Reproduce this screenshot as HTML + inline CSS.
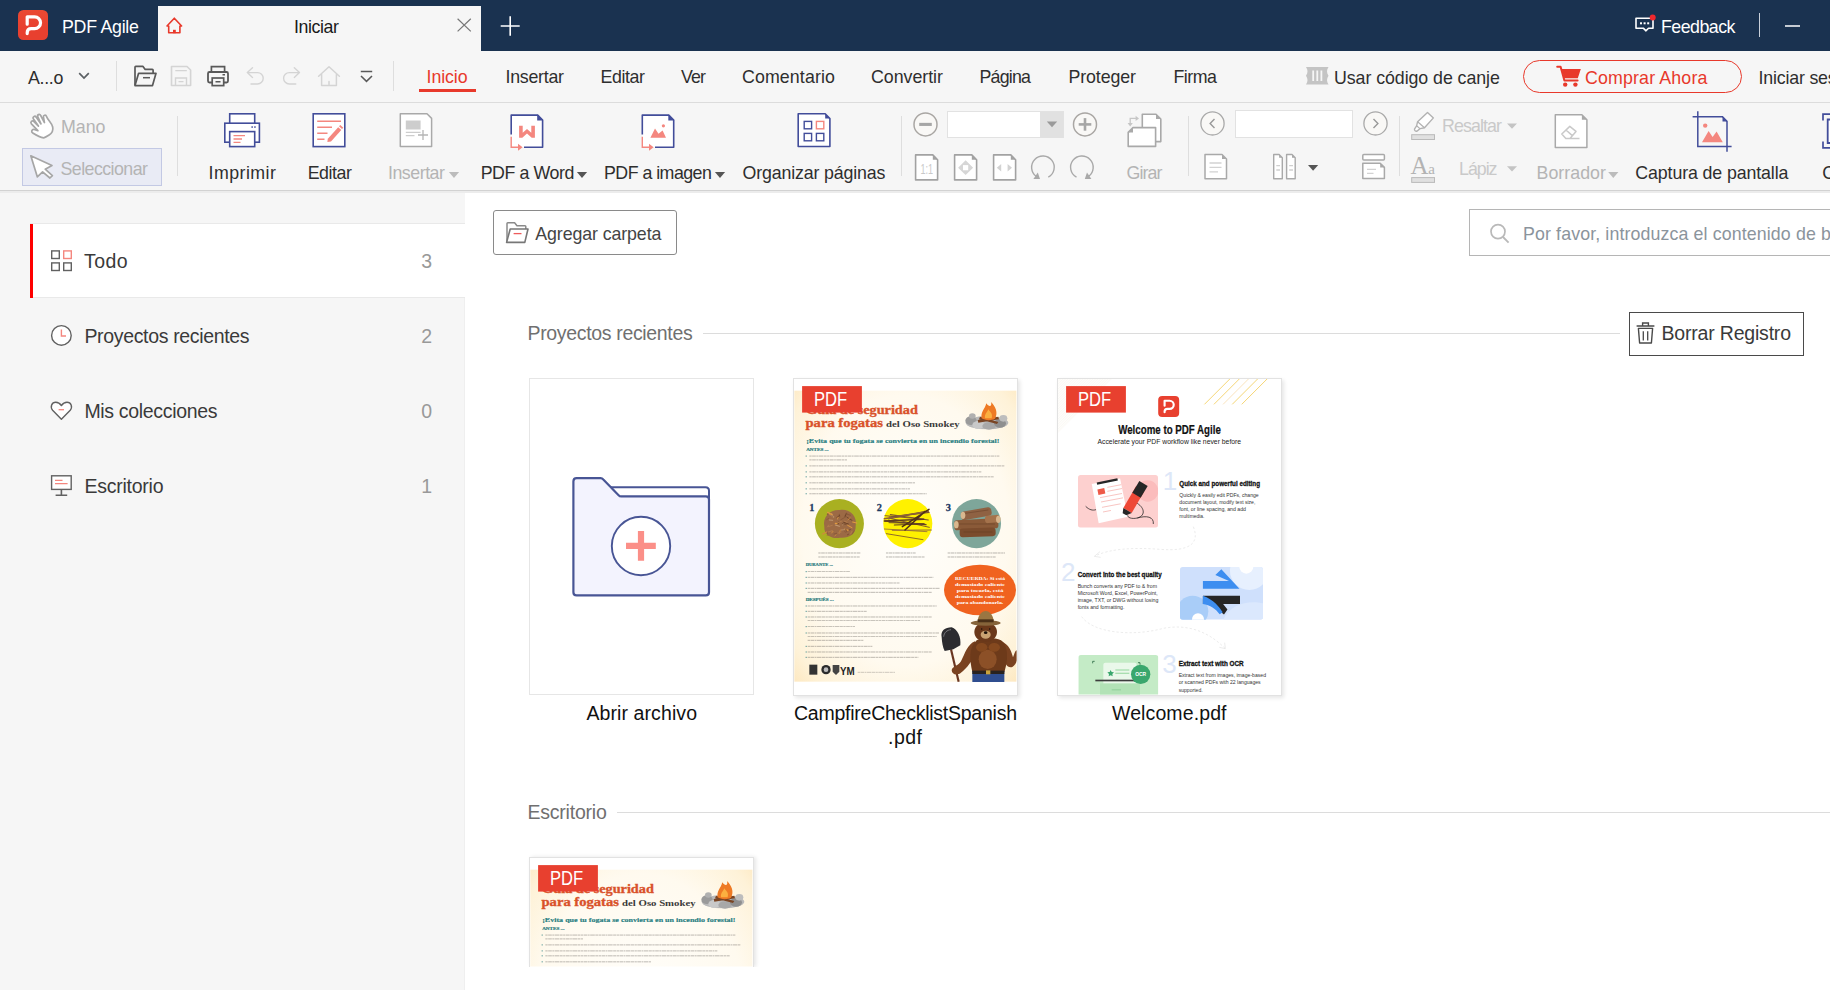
<!DOCTYPE html>
<html><head><meta charset="utf-8"><title>PDF Agile</title>
<style>
html,body{margin:0;padding:0;}
body{width:1830px;height:990px;overflow:hidden;position:relative;background:#fff;font-family:"Liberation Sans",sans-serif;}
.b{position:absolute;}
.t{position:absolute;white-space:nowrap;}
svg.ov{position:absolute;left:0;top:0;}
</style></head><body>
<div class="b" style="left:0px;top:0px;width:1830px;height:51px;background:#1a3250;"></div>
<div class="b" style="left:158px;top:6px;width:323px;height:45px;background:#f6f6f6;"></div>
<div class="b" style="left:18px;top:10px;width:30.2px;height:30.2px;background:linear-gradient(#ea4a33,#e8402f 60%);border-radius:5.5px;"></div>
<span class="t" style="left:62.00px;top:18.83px;font-size:17.8px;line-height:17.8px;color:#fff;letter-spacing:-0.268px;">PDF Agile</span>
<span class="t" style="left:294.00px;top:18.53px;font-size:17.8px;line-height:17.8px;color:#1a1a1a;letter-spacing:-0.414px;">Iniciar</span>
<span class="t" style="left:1661.00px;top:18.83px;font-size:17.8px;line-height:17.8px;color:#fff;letter-spacing:-0.524px;">Feedback</span>
<div class="b" style="left:1759px;top:13px;width:1.4px;height:24px;background:#c9d0da;"></div>
<div class="b" style="left:0px;top:51px;width:1830px;height:51px;background:#f6f6f6;"></div>
<div class="b" style="left:0px;top:101.5px;width:1830px;height:1.2px;background:#dcdcdc;"></div>
<div class="b" style="left:116px;top:61px;width:1px;height:30px;background:#dedede;"></div>
<div class="b" style="left:393px;top:61px;width:1px;height:30px;background:#dedede;"></div>
<span class="t" style="left:28.00px;top:69.93px;font-size:17.8px;line-height:17.8px;color:#2e2e2e;letter-spacing:-0.302px;">A...o</span>
<span class="t" style="left:426.60px;top:68.83px;font-size:17.8px;line-height:17.8px;color:#e8392b;letter-spacing:-0.111px;">Inicio</span>
<span class="t" style="left:505.50px;top:68.83px;font-size:17.8px;line-height:17.8px;color:#2e2e2e;letter-spacing:-0.264px;">Insertar</span>
<span class="t" style="left:600.50px;top:68.83px;font-size:17.8px;line-height:17.8px;color:#2e2e2e;letter-spacing:-0.400px;">Editar</span>
<span class="t" style="left:681.00px;top:68.83px;font-size:17.8px;line-height:17.8px;color:#2e2e2e;letter-spacing:-0.859px;">Ver</span>
<span class="t" style="left:742.00px;top:68.83px;font-size:17.8px;line-height:17.8px;color:#2e2e2e;letter-spacing:0.110px;">Comentario</span>
<span class="t" style="left:871.00px;top:68.83px;font-size:17.8px;line-height:17.8px;color:#2e2e2e;letter-spacing:-0.026px;">Convertir</span>
<span class="t" style="left:979.50px;top:68.83px;font-size:17.8px;line-height:17.8px;color:#2e2e2e;letter-spacing:-0.785px;">Página</span>
<span class="t" style="left:1068.50px;top:68.83px;font-size:17.8px;line-height:17.8px;color:#2e2e2e;letter-spacing:-0.110px;">Proteger</span>
<span class="t" style="left:1173.50px;top:68.83px;font-size:17.8px;line-height:17.8px;color:#2e2e2e;letter-spacing:-0.496px;">Firma</span>
<div class="b" style="left:419px;top:89px;width:57px;height:3px;background:#e8392b;"></div>
<span class="t" style="left:1334.00px;top:70.03px;font-size:17.8px;line-height:17.8px;color:#2e2e2e;letter-spacing:-0.064px;">Usar código de canje</span>
<div class="b" style="left:1523px;top:60px;width:219px;height:32.6px;border:1.4px solid #e8392b;border-radius:17px;box-sizing:border-box;"></div>
<span class="t" style="left:1585.00px;top:70.03px;font-size:17.8px;line-height:17.8px;color:#e8392b;letter-spacing:0.150px;">Comprar Ahora</span>
<span class="t" style="left:1758.50px;top:70.03px;font-size:17.8px;line-height:17.8px;color:#2e2e2e;letter-spacing:-0.183px;">Iniciar sesión</span>
<div class="b" style="left:0px;top:102.7px;width:1830px;height:87.3px;background:#f6f6f6;"></div>
<div class="b" style="left:0px;top:189.6px;width:1830px;height:1.6px;background:#d2d2d2;"></div>
<div class="b" style="left:0px;top:191.2px;width:1830px;height:1.6px;background:#ececec;"></div>
<div class="b" style="left:22px;top:148px;width:140px;height:37.5px;background:#e9ebf5;border:1px solid #c3c9e4;box-sizing:border-box;"></div>
<span class="t" style="left:61.00px;top:118.63px;font-size:17.8px;line-height:17.8px;color:#b4b4b4;letter-spacing:-0.009px;">Mano</span>
<span class="t" style="left:60.50px;top:161.33px;font-size:17.8px;line-height:17.8px;color:#b4b4b4;letter-spacing:-0.551px;">Seleccionar</span>
<div class="b" style="left:177px;top:116px;width:1px;height:60px;background:#dedede;"></div>
<div class="b" style="left:901px;top:116px;width:1px;height:60px;background:#dedede;"></div>
<div class="b" style="left:1188px;top:116px;width:1px;height:60px;background:#dedede;"></div>
<div class="b" style="left:1399px;top:116px;width:1px;height:60px;background:#dedede;"></div>
<span class="t" style="left:208.50px;top:164.53px;font-size:17.8px;line-height:17.8px;color:#2e2e2e;letter-spacing:0.462px;">Imprimir</span>
<span class="t" style="left:307.70px;top:164.53px;font-size:17.8px;line-height:17.8px;color:#2e2e2e;letter-spacing:-0.440px;">Editar</span>
<span class="t" style="left:388.00px;top:164.53px;font-size:17.8px;line-height:17.8px;color:#b4b4b4;letter-spacing:-0.478px;">Insertar</span>
<span class="t" style="left:480.70px;top:164.53px;font-size:17.8px;line-height:17.8px;color:#2e2e2e;letter-spacing:-0.433px;">PDF a Word</span>
<span class="t" style="left:604.00px;top:164.53px;font-size:17.8px;line-height:17.8px;color:#2e2e2e;letter-spacing:-0.525px;">PDF a imagen</span>
<span class="t" style="left:742.50px;top:164.53px;font-size:17.8px;line-height:17.8px;color:#2e2e2e;letter-spacing:-0.153px;">Organizar páginas</span>
<span class="t" style="left:1126.50px;top:164.53px;font-size:17.8px;line-height:17.8px;color:#b4b4b4;letter-spacing:-0.889px;">Girar</span>
<span class="t" style="left:1442.00px;top:118.03px;font-size:17.8px;line-height:17.8px;color:#c9c9c9;letter-spacing:-0.897px;">Resaltar</span>
<span class="t" style="left:1459.00px;top:161.23px;font-size:17.8px;line-height:17.8px;color:#c9c9c9;letter-spacing:-1.013px;">Lápiz</span>
<span class="t" style="left:1536.50px;top:164.53px;font-size:17.8px;line-height:17.8px;color:#b4b4b4;letter-spacing:0.035px;">Borrador</span>
<span class="t" style="left:1635.30px;top:164.53px;font-size:17.8px;line-height:17.8px;color:#2e2e2e;letter-spacing:-0.115px;">Captura de pantalla</span>
<span class="t" style="left:1822.20px;top:164.53px;font-size:17.8px;line-height:17.8px;color:#2e2e2e;letter-spacing:-0.309px;">Combinar</span>
<div class="b" style="left:947px;top:111px;width:117px;height:27px;background:#fff;border:1px solid #e2e2e2;box-sizing:border-box;"></div>
<div class="b" style="left:1040.3px;top:111.5px;width:23.2px;height:26px;background:#e1e1e1;"></div>
<div class="b" style="left:1235.4px;top:109.5px;width:117.2px;height:28.2px;background:#fff;border:1px solid #e2e2e2;box-sizing:border-box;"></div>
<div class="b" style="left:0px;top:192.8px;width:465px;height:797.2px;background:#f6f6f6;"></div>
<div class="b" style="left:464.8px;top:192.8px;width:1365.2px;height:797.2px;background:#fff;"></div>
<div class="b" style="left:464.3px;top:298px;width:0.8px;height:692px;background:#efefef;"></div>
<div class="b" style="left:30px;top:223px;width:434.8px;height:75px;background:#fff;border-top:1px solid #e9e9e9;border-bottom:1px solid #e9e9e9;box-sizing:border-box;"></div>
<div class="b" style="left:30px;top:223.8px;width:3px;height:74.2px;background:#fe0000;"></div>
<span class="t" style="left:84.00px;top:252.19px;font-size:19.5px;line-height:19.5px;color:#3a3a3a;letter-spacing:0.438px;">Todo</span>
<span class="t" style="left:84.40px;top:327.09px;font-size:19.5px;line-height:19.5px;color:#3a3a3a;letter-spacing:-0.336px;">Proyectos recientes</span>
<span class="t" style="left:84.40px;top:401.99px;font-size:19.5px;line-height:19.5px;color:#3a3a3a;letter-spacing:-0.317px;">Mis colecciones</span>
<span class="t" style="left:84.40px;top:476.99px;font-size:19.5px;line-height:19.5px;color:#3a3a3a;letter-spacing:-0.241px;">Escritorio</span>
<span class="t" style="left:421.30px;top:252.19px;font-size:19.5px;line-height:19.5px;color:#999;">3</span>
<span class="t" style="left:421.30px;top:327.09px;font-size:19.5px;line-height:19.5px;color:#999;">2</span>
<span class="t" style="left:421.30px;top:401.99px;font-size:19.5px;line-height:19.5px;color:#999;">0</span>
<span class="t" style="left:421.30px;top:476.99px;font-size:19.5px;line-height:19.5px;color:#999;">1</span>
<div class="b" style="left:493px;top:210px;width:184px;height:44.8px;border:1.2px solid #8a8a8a;border-radius:3px;box-sizing:border-box;background:#fff;"></div>
<span class="t" style="left:535.30px;top:225.83px;font-size:17.8px;line-height:17.8px;color:#444;letter-spacing:-0.103px;">Agregar carpeta</span>
<div class="b" style="left:1469px;top:209px;width:380px;height:46.5px;border:1.2px solid #b5b5b5;box-sizing:border-box;background:#fff;"></div>
<span class="t" style="left:1523.00px;top:225.63px;font-size:17.8px;line-height:17.8px;color:#8b949c;letter-spacing:0.116px;">Por favor, introduzca el contenido de búsqueda</span>
<span class="t" style="left:527.50px;top:324.49px;font-size:19.5px;line-height:19.5px;color:#707070;letter-spacing:-0.336px;">Proyectos recientes</span>
<div class="b" style="left:703px;top:332.7px;width:917px;height:1.2px;background:#dcdcdc;"></div>
<div class="b" style="left:1629px;top:312px;width:175px;height:43.5px;border:1.3px solid #4a4a4a;box-sizing:border-box;background:#fff;"></div>
<span class="t" style="left:1661.50px;top:324.49px;font-size:19.5px;line-height:19.5px;color:#3a3a3a;letter-spacing:-0.193px;">Borrar Registro</span>
<span class="t" style="left:527.50px;top:803.39px;font-size:19.5px;line-height:19.5px;color:#707070;letter-spacing:-0.219px;">Escritorio</span>
<div class="b" style="left:617px;top:811.6px;width:1213px;height:1.2px;background:#dcdcdc;"></div>
<div class="b" style="left:529px;top:378px;width:224.6px;height:317.4px;border:1px solid #e6e6e6;box-sizing:border-box;background:#fff;"></div>
<span class="t" style="left:586.50px;top:703.99px;font-size:19.5px;line-height:19.5px;color:#111;letter-spacing:0.087px;">Abrir archivo</span>
<span class="t" style="left:794.00px;top:703.99px;font-size:19.5px;line-height:19.5px;color:#111;letter-spacing:-0.247px;">CampfireChecklistSpanish</span>
<span class="t" style="left:888.00px;top:727.99px;font-size:19.5px;line-height:19.5px;color:#111;letter-spacing:0.492px;">.pdf</span>
<span class="t" style="left:1112.00px;top:703.99px;font-size:19.5px;line-height:19.5px;color:#111;letter-spacing:0.106px;">Welcome.pdf</span>
<div class="b" style="left:793px;top:378px;width:224.6px;height:317.6px;border:1px solid #e2e2e2;box-sizing:border-box;background:#fff;box-shadow:2px 2px 4px rgba(0,0,0,0.10);"></div>
<div class="b" style="left:1057px;top:378px;width:224.6px;height:317.6px;border:1px solid #e2e2e2;box-sizing:border-box;background:#fff;box-shadow:2px 2px 4px rgba(0,0,0,0.10);"></div>
<div class="b" style="left:529px;top:857px;width:224.6px;height:109.6px;border:1px solid #e2e2e2;border-bottom:none;box-sizing:border-box;background:#fff;box-shadow:2px 0px 4px rgba(0,0,0,0.10);"></div>
<div class="b" style="left:465.6px;top:966.6px;width:1365px;height:24px;background:#fff;"></div>

<svg class="ov" width="1830" height="990" viewBox="0 0 1830 990">
<path d="M27.2 24.2 V16.8 H34.6 a5.95 5.95 0 0 1 0 11.9 H31.2 q-4 0 -4 4 V33.6" fill="none" stroke="#fff" stroke-width="3.2" stroke-linecap="round" stroke-linejoin="round"/><path d="M167 26 L174.3 18.2 L181.6 26 H179.9 V32.8 H168.7 V26 Z" fill="none" stroke="#e8392b" stroke-width="1.6" stroke-linejoin="round"/><rect x="173" y="29.8" width="2.8" height="3.4" fill="#e8392b"/><path d="M457.6 18.8 L470.8 31.4 M470.8 18.8 L457.6 31.4" stroke="#777" stroke-width="1.2" fill="none"/><path d="M500.7 26 H519.7 M510.2 16.2 V35.8" stroke="#fff" stroke-width="1.6" fill="none"/><path d="M1636 18.3 H1653 V28.2 H1648.5 L1646 30.8 L1643.3 28.2 H1636 Z" fill="none" stroke="#fff" stroke-width="1.6" stroke-linejoin="round"/><rect x="1640" y="22.3" width="2" height="2" fill="#fff"/><rect x="1643.6" y="22.3" width="2" height="2" fill="#fff"/><rect x="1647.2" y="22.3" width="2" height="2" fill="#fff"/><circle cx="1652.7" cy="17.4" r="3" fill="#f0282d"/><path d="M1785 26 H1800" stroke="#fff" stroke-width="1.5"/><path d="M79.2 73.2 L84 78.1 L88.8 73.2" fill="none" stroke="#5a5f63" stroke-width="1.7"/><path d="M135 85.3 V67.2 q0-.8 .8-.8 H143 l2.2 3 H152.3 q.8 0 .8 .8 V73" fill="none" stroke="#595959" stroke-width="1.7" stroke-linejoin="round"/><path d="M138.6 73.3 H156 L152.5 85.6 H135 Z" fill="none" stroke="#595959" stroke-width="1.7" stroke-linejoin="round"/><path d="M143 77.7 H150" stroke="#595959" stroke-width="1.5"/><path d="M171.5 66.5 H187 L190.6 70 V85.5 H171.5 Z" fill="none" stroke="#d4d4d4" stroke-width="1.6" stroke-linejoin="round"/><path d="M175.3 70.6 H186.8 M175.5 85.5 V78 H186.5 V85.5 M178.5 81.6 H183.5" fill="none" stroke="#d4d4d4" stroke-width="1.4"/><path d="M211.4 72 V66.7 H224.6 V72" fill="none" stroke="#595959" stroke-width="1.7"/><rect x="208" y="72" width="20" height="10.5" rx="1.5" fill="none" stroke="#595959" stroke-width="1.8"/><rect x="212.2" y="78" width="11.5" height="7.6" fill="#f6f6f6" stroke="#595959" stroke-width="1.7"/><path d="M215.5 81.7 H220.5 M222.5 74.8 H225" stroke="#595959" stroke-width="1.4"/><path d="M252.5 67.8 L247.3 72.6 L252.5 77.4 M247.8 72.6 H257.5 a5.7 5.7 0 0 1 0 11.4 H251" fill="none" stroke="#d4d4d4" stroke-width="1.4" stroke-linecap="round" stroke-linejoin="round"/><path d="M294.3 67.8 L299.5 72.6 L294.3 77.4 M299 72.6 H289.3 a5.7 5.7 0 0 0 0 11.4 H295.8" fill="none" stroke="#d4d4d4" stroke-width="1.4" stroke-linecap="round" stroke-linejoin="round"/><path d="M318.6 76.3 L329 66.8 L339.4 76.3 M321.6 74.4 V85.4 H336.4 V74.4 M329 85.4 V81.5" fill="none" stroke="#d4d4d4" stroke-width="1.5" stroke-linejoin="round" stroke-linecap="round"/><path d="M360.8 71.4 H372.2 M361 76 L366.5 81.4 L372 76" fill="none" stroke="#595959" stroke-width="1.5"/><path d="M1306 67 H1328.5 C1326.5 70 1326.5 72.5 1328.5 75.8 C1326.5 79 1326.5 81.5 1328.5 84.6 H1306 C1308 81.5 1308 79 1306 75.8 C1308 72.5 1308 70 1306 67 Z" fill="#c4c4c4"/><path d="M1313.2 70.5 V81 M1317.3 70.5 V81 M1321.4 70.5 V81" stroke="#f6f6f6" stroke-width="1.8"/><path d="M1557.2 66.7 H1560.6 L1564.4 80.5 H1577.6" fill="none" stroke="#e8392b" stroke-width="2" stroke-linejoin="round" stroke-linecap="round"/><path d="M1561.6 69 H1580.8 L1577.8 78.2 H1564.2 Z" fill="#e8392b"/><circle cx="1565.2" cy="84.6" r="2.2" fill="#e8392b"/><circle cx="1575.4" cy="84.6" r="2.2" fill="#e8392b"/><g transform="translate(41.6 125.4) rotate(-33)"><path d="M-5 11.6 C-8 9 -10 5 -11.6 1.6 C-12.6 -0.6 -10 -2.2 -8.5 -0.6 L-6 2.4 L-7.7 -6.8 C-8 -9.2 -4.8 -9.8 -4.3 -7.4 L-3 -1.2 L-3.3 -9.8 C-3.3 -12.2 -0.1 -12.2 0 -9.8 L0.3 -1.6 L1.5 -9.2 C1.8 -11.5 4.9 -11.1 4.6 -8.8 L3.9 -0.8 L6 -5.8 C6.8 -7.9 9.6 -7 9 -4.8 C8 -1 10 3.2 8.4 7.4 C7.2 10.6 4.2 12.2 1 12.2 C-1.5 12.2 -3.5 12.2 -5 11.6 Z" fill="#fff" stroke="#a6a6a6" stroke-width="1.7" stroke-linejoin="round"/></g><path d="M30.8 155.8 L52 165.4 L45.2 169.2 L52.4 175.6 L49.9 178 L42.6 171.8 L37.3 176.8 Z" fill="#fff" stroke="#a6a6a6" stroke-width="1.7" stroke-linejoin="round"/><rect x="229.7" y="113.8" width="25" height="12" fill="#fff" stroke="#424d9a" stroke-width="1.6"/><rect x="224.8" y="123.2" width="34.6" height="19" fill="#fff" stroke="#424d9a" stroke-width="1.6"/><rect x="229.7" y="131.6" width="25" height="15" fill="#fff" stroke="#424d9a" stroke-width="1.6"/><path d="M233.5 135.6 H245 M233.5 139 H242 M233.5 142.4 H240.5" stroke="#f4877f" stroke-width="1.3"/><rect x="251.4" y="126.3" width="1.5" height="1.5" fill="#424d9a"/><rect x="254.2" y="126.3" width="1.5" height="1.5" fill="#424d9a"/><rect x="313.2" y="113.8" width="31.6" height="32.8" fill="#fff" stroke="#424d9a" stroke-width="1.6"/><path d="M317.2 121.3 H341 M317.2 127.3 H332 M317.2 133.3 H327.5 M317.2 139.3 H324.5" stroke="#f4877f" stroke-width="1.5"/><path d="M327.8 138.8 L338.2 127.2 L341.3 130 L331 141.4 L327.4 142 Z" fill="#f4877f"/><path d="M339 126.3 L340.3 124.9 L343.3 127.7 L342 129.1 Z" fill="#f4877f"/><path d="M400.3 113.8 H427 L431.6 118.4 V146.5 H400.3 Z" fill="#fff" stroke="#a9a9a9" stroke-width="1.5" stroke-linejoin="round"/><rect x="405.8" y="120.5" width="14.8" height="9" fill="#cdcdcd"/><path d="M405.8 132.4 H420.6 M405.8 135.6 H414.5" stroke="#cdcdcd" stroke-width="1.2"/><path d="M418 135 H428 M423 130 V140" stroke="#b5b5b5" stroke-width="1.3"/><path d="M448.9 172.1 H459.1 L454.0 177.9 Z" fill="#bcbcbc"/><path d="M511.2 115.1 H537.7 L542.6 120 V147.3 H511.2 Z" fill="#fff"/><path d="M511.2 134.6 V115.1 H537.7 L542.6 120 V147.3 H524" fill="none" stroke="#424d9a" stroke-width="1.6" stroke-linejoin="round"/><path d="M537.2 114.6 L543.2 120.6 H537.2 Z" fill="#424d9a"/><path d="M519.1 125.8 H522.7 V132.8 L527 128.9 L531.3 132.8 V125.8 H534.9 V137.8 H531.7 L527 133.6 L522.3 137.8 H519.1 Z" fill="#f4877f"/><path d="M511.2 136.8 V147.3 H518.5" fill="none" stroke="#f4877f" stroke-width="1.4"/><path d="M518 143.8 L522.6 147.3 L518 150.8 Z" fill="#f4877f"/><path d="M576.9 172.1 H587.1 L582.0 177.9 Z" fill="#555"/><path d="M642.3 115.1 H668.8 L673.7 120 V147.3 H642.3 Z" fill="#fff"/><path d="M642.3 134.6 V115.1 H668.8 L673.7 120 V147.3 H655" fill="none" stroke="#424d9a" stroke-width="1.6" stroke-linejoin="round"/><path d="M668.3 114.6 L674.3 120.6 H668.3 Z" fill="#424d9a"/><path d="M650.4 137.8 L655 128.5 L658.5 133.8 L662.6 130.6 L666 137.8 Z" fill="#f4877f"/><circle cx="663.4" cy="125.8" r="1.6" fill="#f4877f"/><path d="M642.3 136.8 V147.3 H649.5" fill="none" stroke="#f4877f" stroke-width="1.4"/><path d="M649 143.8 L653.6 147.3 L649 150.8 Z" fill="#f4877f"/><path d="M714.9 172.1 H725.1 L720.0 177.9 Z" fill="#555"/><path d="M798.2 113.8 H825.2 L829.9 118.5 V146.5 H798.2 Z" fill="#fff" stroke="#424d9a" stroke-width="1.6" stroke-linejoin="round"/><path d="M825.2 113.8 L829.9 118.5 H825.2 Z" fill="#424d9a"/><rect x="804.2" y="121.4" width="7.4" height="7.4" fill="none" stroke="#424d9a" stroke-width="1.4"/><rect x="816.4" y="121.4" width="7.4" height="7.4" fill="none" stroke="#f4877f" stroke-width="1.4"/><rect x="804.2" y="133.4" width="7.4" height="7.4" fill="none" stroke="#424d9a" stroke-width="1.4"/><rect x="816.4" y="133.4" width="7.4" height="7.4" fill="none" stroke="#424d9a" stroke-width="1.4"/><circle cx="925.5" cy="124.4" r="11.5" fill="#f9f8f6" stroke="#a9a6a3" stroke-width="1.5"/><path d="M919.2 124.4 H931.8" stroke="#a6a6a6" stroke-width="3.1"/><circle cx="1085" cy="124.4" r="11.5" fill="#f9f8f6" stroke="#a9a6a3" stroke-width="1.5"/><path d="M1078.7 124.4 H1091.3" stroke="#a6a6a6" stroke-width="2.6"/><path d="M1085 118.1 V130.7" stroke="#a6a6a6" stroke-width="2.6"/><path d="M1046.8 121.6 H1057.2 L1052.0 127.2 Z" fill="#9a9a9a"/><path d="M915.6 154.9 H932.8000000000001 L937.6 159.70000000000002 V179.9 H915.6 Z" fill="#fff" stroke="#a2a2a2" stroke-width="1.6" stroke-linejoin="round"/><path d="M932.8000000000001 154.9 L937.6 159.70000000000002 H932.8000000000001 Z" fill="#a2a2a2"/><text x="926.7" y="173.5" font-family="Liberation Sans, sans-serif" font-size="14.5" fill="#c9c9c9" text-anchor="middle" textLength="12.6" lengthAdjust="spacingAndGlyphs">1:1</text><path d="M954.6 154.9 H971.8000000000001 L976.6 159.70000000000002 V179.9 H954.6 Z" fill="#fff" stroke="#a2a2a2" stroke-width="1.6" stroke-linejoin="round"/><path d="M971.8000000000001 154.9 L976.6 159.70000000000002 H971.8000000000001 Z" fill="#a2a2a2"/><path d="M958.1 167.7 L965.6 160.29999999999998 L973.1 167.7 L965.6 175.1 Z" fill="#d6d6d6"/><rect x="963.0" y="165.1" width="5.2" height="5.2" fill="#fff"/><path d="M993.6 154.9 H1010.8000000000001 L1015.6 159.70000000000002 V179.9 H993.6 Z" fill="#fff" stroke="#a2a2a2" stroke-width="1.6" stroke-linejoin="round"/><path d="M1010.8000000000001 154.9 L1015.6 159.70000000000002 H1010.8000000000001 Z" fill="#a2a2a2"/><path d="M1001.1999999999999 163.89999999999998 L996.8 167.7 L1001.1999999999999 171.5 Z M1007.6 163.89999999999998 L1012.0 167.7 L1007.6 171.5 Z" fill="#d2d2d2"/><path d="M1048.3 177.2 A11.3 11.3 0 1 0 1036.4 176.5" fill="none" stroke="#a9a9a9" stroke-width="1.4"/><path d="M1033.4 178.9 L1040 178.9 L1037.8 172.6 Z" fill="#a9a9a9"/><path d="M1076.5 177.2 A11.3 11.3 0 1 1 1088.4 176.5" fill="none" stroke="#a9a9a9" stroke-width="1.4"/><path d="M1091.4 178.9 L1084.8 178.9 L1087 172.6 Z" fill="#a9a9a9"/><path d="M1142.3 114.2 H1156.0 L1160.8 119.0 V141.6 H1142.3 Z" fill="#fff" stroke="#a9a9a9" stroke-width="1.6" stroke-linejoin="round"/><path d="M1156.0 114.2 L1160.8 119.0 H1156.0 Z" fill="#a9a9a9"/><path d="M1133 127.6 H1155.6 V146.4 H1128.2 V132.4 Z" fill="#fff" stroke="#a9a9a9" stroke-width="1.6" stroke-linejoin="round"/><path d="M1133 127.6 V132.4 H1128.2 Z" fill="#a9a9a9"/><path d="M1130.2 124 V118.4 H1136" fill="none" stroke="#c6c6c6" stroke-width="1.3"/><path d="M1135.6 115.8 L1139 118.4 L1135.6 121 Z" fill="#c6c6c6"/><path d="M1127.6 123 L1130.2 126.4 L1132.8 123 Z" fill="#c6c6c6"/><circle cx="1212.5" cy="123.4" r="11.6" fill="#f9f8f6" stroke="#a9a9a9" stroke-width="1.3"/><path d="M1214.5 118.9 L1210.1 123.4 L1214.5 127.9" fill="none" stroke="#999" stroke-width="1.4"/><circle cx="1375.5" cy="123.4" r="11.6" fill="#f9f8f6" stroke="#a9a9a9" stroke-width="1.3"/><path d="M1373.5 118.9 L1377.9 123.4 L1373.5 127.9" fill="none" stroke="#999" stroke-width="1.4"/><path d="M1205 154.5 H1222.0 L1226.5 159.0 V178.7 H1205 Z" fill="#fff" stroke="#a9a9a9" stroke-width="1.5" stroke-linejoin="round"/><path d="M1222.0 154.5 L1226.5 159.0 H1222.0 Z" fill="#a9a9a9"/><path d="M1209.5 163 H1221.5 M1209.5 167.4 H1221.5 M1209.5 171.8 H1218" stroke="#d2d2d2" stroke-width="1.3"/><path d="M1273.7 154.5 H1279.1 L1282.3 157.7 V178.7 H1273.7 Z" fill="#fff" stroke="#a9a9a9" stroke-width="1.4" stroke-linejoin="round"/><path d="M1279.1 154.5 L1282.3 157.7 H1279.1 Z" fill="#a9a9a9"/><path d="M1286.6 154.5 H1291.9999999999998 L1295.1999999999998 157.7 V178.7 H1286.6 Z" fill="#fff" stroke="#a9a9a9" stroke-width="1.4" stroke-linejoin="round"/><path d="M1291.9999999999998 154.5 L1295.1999999999998 157.7 H1291.9999999999998 Z" fill="#a9a9a9"/><path d="M1276.3 165.6 H1280 M1276.3 170 H1280 M1289.2 165.6 H1293 M1289.2 170 H1293" stroke="#cfcfcf" stroke-width="1.4"/><path d="M1308 165 H1318.2 L1313.1 170.8 Z" fill="#555"/><rect x="1362.8" y="154.6" width="21.6" height="5.4" rx="1" fill="#fff" stroke="#a9a9a9" stroke-width="1.5"/><path d="M1362.8 163.2 H1380.1999999999998 L1384.3999999999999 167.39999999999998 V178.6 H1362.8 Z" fill="#fff" stroke="#a9a9a9" stroke-width="1.5" stroke-linejoin="round"/><path d="M1380.1999999999998 163.2 L1384.3999999999999 167.39999999999998 H1380.1999999999998 Z" fill="#a9a9a9"/><path d="M1367 169.4 H1376 M1367 173.4 H1373.5" stroke="#d2d2d2" stroke-width="1.3"/><path d="M1427.5 112.4 L1433.4 117.9 L1424.5 127.8 L1420 128.6 L1417.2 131 C1415.6 131.6 1414 130.4 1414.6 128.8 L1416.6 125.8 L1417.6 121.7 Z" fill="#fff" stroke="#b2b2b2" stroke-width="1.4" stroke-linejoin="round"/><path d="M1417.6 121.7 L1424.5 127.8 M1416.6 125.8 L1420 128.6" stroke="#b2b2b2" stroke-width="1.2"/><rect x="1411.7" y="134.7" width="22.8" height="4.8" fill="#e0e0e0" stroke="#bababa" stroke-width="1"/><path d="M1507 123.4 H1517 L1512.0 128.8 Z" fill="#c4c4c4"/><text x="1410.6" y="173.8" font-family="Liberation Serif, serif" font-size="26" fill="#b3b3b3" textLength="18" lengthAdjust="spacingAndGlyphs">A</text><text x="1428.2" y="173.8" font-family="Liberation Serif, serif" font-size="15" fill="#b3b3b3">a</text><rect x="1411.7" y="177.6" width="22.8" height="4.8" fill="#e0e0e0" stroke="#bababa" stroke-width="1"/><path d="M1507 166.2 H1517 L1512.0 171.6 Z" fill="#c4c4c4"/><path d="M1555.3 114.8 H1581.8999999999999 L1586.8999999999999 119.8 V147.6 H1555.3 Z" fill="#fff" stroke="#a9a9a9" stroke-width="1.5" stroke-linejoin="round"/><path d="M1581.8999999999999 114.8 L1586.8999999999999 119.8 H1581.8999999999999 Z" fill="#a9a9a9"/><path d="M1561.8 134 L1569.8 126.4 L1576 131.4 L1570 138.4 H1565.8 Z M1566 130 L1572.3 135.6 M1568 138.6 H1579.5" fill="none" stroke="#c9c9c9" stroke-width="1.5" stroke-linejoin="round"/><path d="M1608.2 172.1 H1618.4 L1613.3000000000002 177.9 Z" fill="#bcbcbc"/><path d="M1692.6 116.8 H1722.5 L1727 121.4 V151.8 M1697.8 111.2 V146.6 H1731.6" fill="none" stroke="#424d9a" stroke-width="1.5"/><path d="M1722.5 116.8 L1727 121.4 H1722.5 Z" fill="#424d9a"/><path d="M1702 142.3 L1708.6 131 L1712.6 137 L1716.6 131.6 L1722.8 142.3 Z" fill="#f4877f"/><circle cx="1705.2" cy="125.6" r="2.2" fill="#f4877f"/><path d="M1831 114.2 H1823 V120.4 M1823 141.6 V147.8 H1831" fill="none" stroke="#424d9a" stroke-width="1.7"/><path d="M1831 119.5 H1827.7 V143 H1831" fill="#fff" stroke="#424d9a" stroke-width="1.8"/><rect x="51.7" y="250.9" width="7.6" height="7.6" fill="none" stroke="#616161" stroke-width="1.4"/><rect x="63.7" y="250.9" width="7.6" height="7.6" fill="none" stroke="#f4877f" stroke-width="1.4"/><rect x="51.7" y="262.9" width="7.6" height="7.6" fill="none" stroke="#616161" stroke-width="1.4"/><rect x="63.7" y="262.9" width="7.6" height="7.6" fill="none" stroke="#616161" stroke-width="1.4"/><circle cx="61.4" cy="335.4" r="9.8" fill="#fff" stroke="#616161" stroke-width="1.4"/><path d="M61.4 329.5 V336 H66" fill="none" stroke="#f4877f" stroke-width="1.4"/><path d="M61.4 419.3 L52.6 410.2 C50 407.2 51.6 402.2 55.8 402.2 C58.4 402.2 60.2 403.8 61.4 405.6 C62.6 403.8 64.4 402.2 67 402.2 C71.2 402.2 72.8 407.2 70.2 410.2 Z" fill="#fff" stroke="#616161" stroke-width="1.4" stroke-linejoin="round"/><path d="M58.6 409.7 H64" stroke="#f4877f" stroke-width="1.3"/><rect x="51.6" y="475.8" width="19.6" height="13.6" fill="#fff" stroke="#616161" stroke-width="1.4"/><path d="M61.4 489.4 V494.8 M55.6 495.2 H67.2" stroke="#616161" stroke-width="1.6"/><path d="M55 480.3 H62.5 M55 483.6 H67.6" stroke="#f4877f" stroke-width="1.2"/><path d="M507 242 V223.6 q0-.8 .8-.8 H514.6 l2.4 3 H525 q.8 0 .8 .8 V229" fill="none" stroke="#8a8a8a" stroke-width="1.5" stroke-linejoin="round"/><path d="M510.2 229 H528 L524.8 242.4 H506.6 Z" fill="#fff" stroke="#777" stroke-width="1.6" stroke-linejoin="round"/><path d="M513.6 233.6 H521.5" stroke="#ee5b5b" stroke-width="1.3"/><circle cx="1498" cy="231.6" r="7" fill="none" stroke="#b9b9b9" stroke-width="1.7"/><path d="M1503 237 L1508.6 242.6" stroke="#b9b9b9" stroke-width="1.8"/><path d="M1636.6 326 H1654.4 M1642.6 325.6 V323 H1648.4 V325.6" fill="none" stroke="#4a4a4a" stroke-width="1.4"/><path d="M1638.4 328.4 L1639.6 343 H1651.4 L1652.6 328.4 Z" fill="none" stroke="#4a4a4a" stroke-width="1.4" stroke-linejoin="round"/><path d="M1643.3 331.2 V340.4 M1647.7 331.2 V340.4" stroke="#4a4a4a" stroke-width="1.3"/><path d="M604 487.3 H705.5 q3.5 0 3.5 3.5 V520 H604 Z" fill="#fff" stroke="#485595" stroke-width="2"/><path d="M573.4 481.4 q0-3.2 3.2-3.2 H600.6 q1.6 0 2.7 1.2 L618.6 495.2 q1.1 1.2 2.7 1.2 H705.8 q3.2 0 3.2 3.2 V592.2 q0 3.2 -3.2 3.2 H576.6 q-3.2 0 -3.2 -3.2 Z" fill="#f3f3fe" stroke="#485595" stroke-width="2.2" stroke-linejoin="round"/><circle cx="641" cy="546" r="29.2" fill="#fff" stroke="#485595" stroke-width="1.9"/><path d="M626 545.9 H655.8 M641 531 V560.8" stroke="#fb8f88" stroke-width="6.2"/><defs><g id="camp"><defs><radialGradient id="cream" cx="50%" cy="48%" r="75%"><stop offset="0" stop-color="#fffefb"/><stop offset="0.62" stop-color="#fffaef"/><stop offset="0.85" stop-color="#fef2d8"/><stop offset="1" stop-color="#fde5b9"/></radialGradient></defs><rect x="28" y="62" width="667" height="873" fill="url(#cream)"/><text x="63.5" y="133.2" font-family="Liberation Serif, serif" font-weight="bold" font-size="37" fill="#d9522a" stroke="#d9522a" stroke-width="1" textLength="335" lengthAdjust="spacingAndGlyphs">Guía de seguridad</text><text x="61.5" y="170" font-family="Liberation Serif, serif" font-weight="bold" font-size="37" fill="#d9522a" stroke="#d9522a" stroke-width="1" textLength="232.5" lengthAdjust="spacingAndGlyphs">para fogatas</text><text x="303.3" y="170" font-family="Liberation Serif, serif" font-weight="bold" font-size="27" fill="#3a3a3a" textLength="220.5" lengthAdjust="spacingAndGlyphs">del Oso Smokey</text><ellipse cx="606" cy="158" rx="64" ry="20" fill="#b9b9b9"/><ellipse cx="558" cy="152" rx="17" ry="13" fill="#9a9a9a"/><ellipse cx="580" cy="165" rx="18" ry="12" fill="#c9c9c9"/><ellipse cx="612" cy="168" rx="20" ry="11" fill="#a8a8a8"/><ellipse cx="645" cy="160" rx="18" ry="13" fill="#8f8f8f"/><ellipse cx="655" cy="145" rx="12" ry="10" fill="#bdbdbd"/><ellipse cx="562" cy="138" rx="10" ry="8" fill="#b0b0b0"/><path d="M578 150 L640 140 L642 148 L580 158 Z M585 140 L640 156 L636 162 L582 148 Z" fill="#7a4524"/><path d="M590 145 C586 125 600 118 604 100 C612 112 622 110 618 96 C632 110 640 128 630 146 C620 152 600 152 590 145 Z" fill="#ee7a24"/><path d="M600 145 C598 132 606 128 610 118 C616 128 624 130 620 145 Z" fill="#fbb040"/><text x="63.5" y="219.3" font-family="Liberation Serif, serif" font-weight="bold" font-size="20.5" fill="#2a7f82" stroke="#2a7f82" stroke-width="0.5" textLength="580" lengthAdjust="spacingAndGlyphs">¡Evita que tu fogata se convierta en un incendio forestal!</text><text x="63.5" y="242.6" font-family="Liberation Serif, serif" font-weight="bold" font-size="12" fill="#22777a" stroke="#22777a" stroke-width="0.5" textLength="67" lengthAdjust="spacingAndGlyphs">ANTES ...</text><path d="M73 258.2 H643" stroke="#716c66" stroke-width="1.9" stroke-dasharray="7 1.5 11 1.5 5 1.5 14 1.5 9 1.5" opacity="0.72"/><path d="M73 287.7 H658" stroke="#716c66" stroke-width="1.9" stroke-dasharray="7 1.5 11 1.5 5 1.5 14 1.5 9 1.5" opacity="0.72"/><path d="M73 305.7 H589" stroke="#716c66" stroke-width="1.9" stroke-dasharray="7 1.5 11 1.5 5 1.5 14 1.5 9 1.5" opacity="0.72"/><path d="M73 320.5 H626" stroke="#716c66" stroke-width="1.9" stroke-dasharray="7 1.5 11 1.5 5 1.5 14 1.5 9 1.5" opacity="0.72"/><path d="M73 338.5 H390" stroke="#716c66" stroke-width="1.9" stroke-dasharray="7 1.5 11 1.5 5 1.5 14 1.5 9 1.5" opacity="0.72"/><path d="M73 356.6 H375" stroke="#716c66" stroke-width="1.9" stroke-dasharray="7 1.5 11 1.5 5 1.5 14 1.5 9 1.5" opacity="0.72"/><path d="M73 371.3 H425" stroke="#716c66" stroke-width="1.9" stroke-dasharray="7 1.5 11 1.5 5 1.5 14 1.5 9 1.5" opacity="0.72"/><path d="M73 269.7 H186" stroke="#716c66" stroke-width="1.9" stroke-dasharray="7 1.5 11 1.5 5 1.5 14 1.5 9 1.5" opacity="0.72"/><rect x="62" y="256.7" width="3" height="3" fill="#2a7f82"/><rect x="62" y="286.2" width="3" height="3" fill="#2a7f82"/><rect x="62" y="304.2" width="3" height="3" fill="#2a7f82"/><rect x="62" y="319.0" width="3" height="3" fill="#2a7f82"/><rect x="62" y="337.0" width="3" height="3" fill="#2a7f82"/><rect x="62" y="355.1" width="3" height="3" fill="#2a7f82"/><rect x="62" y="369.8" width="3" height="3" fill="#2a7f82"/><text x="73" y="423.3" font-family="Liberation Serif, serif" font-weight="bold" font-size="31" fill="#1b3a63" stroke="#1b3a63" stroke-width="0.8">1</text><text x="275" y="423.3" font-family="Liberation Serif, serif" font-weight="bold" font-size="31" fill="#1b3a63" stroke="#1b3a63" stroke-width="0.8">2</text><text x="482" y="423.3" font-family="Liberation Serif, serif" font-weight="bold" font-size="31" fill="#1b3a63" stroke="#1b3a63" stroke-width="0.8">3</text><circle cx="163.2" cy="460.8" r="73.6" fill="#a9b021"/><circle cx="368.4" cy="460.8" r="73.6" fill="#fff100"/><circle cx="574.5" cy="460.8" r="73.6" fill="#7ea69a"/><path d="M118 470 C112 440 135 418 165 420 C195 416 218 440 212 468 C214 492 190 506 165 503 C140 508 116 494 118 470 Z" fill="#9c6a45"/><path d="M143 437 l-3 -7" stroke="#c39a72" stroke-width="2.2" stroke-linecap="round"/><path d="M168 449 l15 -9" stroke="#8a5a3a" stroke-width="3.2" stroke-linecap="round"/><path d="M146 441 l-12 -6" stroke="#c39a72" stroke-width="3.7" stroke-linecap="round"/><path d="M189 481 l-9 -4" stroke="#e09a40" stroke-width="3.8" stroke-linecap="round"/><path d="M201 484 l-4 7" stroke="#b07a4c" stroke-width="3.4" stroke-linecap="round"/><path d="M164 441 l-1 -8" stroke="#8a5a3a" stroke-width="3.7" stroke-linecap="round"/><path d="M125 449 l6 -4" stroke="#8a5a3a" stroke-width="2.6" stroke-linecap="round"/><path d="M158 448 l-1 -5" stroke="#b07a4c" stroke-width="3.7" stroke-linecap="round"/><path d="M127 433 l4 -4" stroke="#8a5a3a" stroke-width="3.4" stroke-linecap="round"/><path d="M180 439 l5 -9" stroke="#6f452a" stroke-width="3.3" stroke-linecap="round"/><path d="M159 442 l-2 2" stroke="#e09a40" stroke-width="3.2" stroke-linecap="round"/><path d="M196 436 l-13 -5" stroke="#8a5a3a" stroke-width="3.3" stroke-linecap="round"/><path d="M143 451 l-10 -1" stroke="#c39a72" stroke-width="2.8" stroke-linecap="round"/><path d="M131 492 l-6 4" stroke="#b07a4c" stroke-width="2.2" stroke-linecap="round"/><path d="M147 492 l8 -2" stroke="#8a5a3a" stroke-width="3.4" stroke-linecap="round"/><path d="M130 470 l12 -4" stroke="#b07a4c" stroke-width="2.9" stroke-linecap="round"/><path d="M201 451 l-15 -9" stroke="#6f452a" stroke-width="2.9" stroke-linecap="round"/><path d="M188 494 l2 -1" stroke="#6f452a" stroke-width="3.0" stroke-linecap="round"/><path d="M141 434 l-13 -7" stroke="#e09a40" stroke-width="3.9" stroke-linecap="round"/><path d="M173 465 l2 -4" stroke="#c39a72" stroke-width="2.4" stroke-linecap="round"/><path d="M166 480 l-3 10" stroke="#d08a3c" stroke-width="2.6" stroke-linecap="round"/><path d="M159 461 l-8 -1" stroke="#e09a40" stroke-width="3.8" stroke-linecap="round"/><path d="M190 462 l-14 -5" stroke="#6f452a" stroke-width="3.1" stroke-linecap="round"/><path d="M186 457 l-7 -3" stroke="#b07a4c" stroke-width="3.2" stroke-linecap="round"/><path d="M203 456 l12 3" stroke="#e09a40" stroke-width="3.5" stroke-linecap="round"/><path d="M164 436 l-9 7" stroke="#6f452a" stroke-width="2.8" stroke-linecap="round"/><path d="M177 481 l4 6" stroke="#8a5a3a" stroke-width="2.6" stroke-linecap="round"/><path d="M188 481 l-5 -2" stroke="#d08a3c" stroke-width="2.3" stroke-linecap="round"/><path d="M202 492 l5 -9" stroke="#8a5a3a" stroke-width="2.4" stroke-linecap="round"/><path d="M201 473 l-13 -7" stroke="#e09a40" stroke-width="3.0" stroke-linecap="round"/><path d="M162 456 l-3 6" stroke="#6f452a" stroke-width="3.9" stroke-linecap="round"/><path d="M125 486 l-12 6" stroke="#d08a3c" stroke-width="3.8" stroke-linecap="round"/><path d="M168 486 l-9 3" stroke="#b07a4c" stroke-width="3.7" stroke-linecap="round"/><path d="M169 480 l12 -1" stroke="#c39a72" stroke-width="2.3" stroke-linecap="round"/><path d="M172 461 l11 2" stroke="#6f452a" stroke-width="2.3" stroke-linecap="round"/><path d="M130 486 l12 -4" stroke="#b07a4c" stroke-width="3.7" stroke-linecap="round"/><path d="M131 465 l-4 6" stroke="#b07a4c" stroke-width="2.9" stroke-linecap="round"/><path d="M185 485 l-3 -8" stroke="#8a5a3a" stroke-width="3.6" stroke-linecap="round"/><path d="M153 494 l-3 4" stroke="#d08a3c" stroke-width="2.3" stroke-linecap="round"/><path d="M195 443 l-6 7" stroke="#d08a3c" stroke-width="2.4" stroke-linecap="round"/><path d="M169 454 l-10 4" stroke="#b07a4c" stroke-width="3.1" stroke-linecap="round"/><path d="M151 465 l12 4" stroke="#c39a72" stroke-width="3.4" stroke-linecap="round"/><path d="M134 437 l9 2" stroke="#8a5a3a" stroke-width="2.3" stroke-linecap="round"/><path d="M144 484 l-4 5" stroke="#e09a40" stroke-width="2.2" stroke-linecap="round"/><path d="M128 488 l1 8" stroke="#8a5a3a" stroke-width="2.8" stroke-linecap="round"/><path d="M193 480 l3 -1" stroke="#6f452a" stroke-width="2.7" stroke-linecap="round"/><path d="M312 458 L416 461" stroke="#6a4626" stroke-width="2.8" stroke-linecap="round"/><path d="M322 481 L439 480" stroke="#94693c" stroke-width="3.1" stroke-linecap="round"/><path d="M316 434 L430 450" stroke="#7a5230" stroke-width="3.4" stroke-linecap="round"/><path d="M298 477 L426 485" stroke="#94693c" stroke-width="2.5" stroke-linecap="round"/><path d="M321 441 L432 427" stroke="#7a5230" stroke-width="3.7" stroke-linecap="round"/><path d="M313 441 L422 427" stroke="#8d6238" stroke-width="3.4" stroke-linecap="round"/><path d="M319 446 L433 472" stroke="#7a5230" stroke-width="2.9" stroke-linecap="round"/><path d="M310 447 L417 425" stroke="#7a5230" stroke-width="3.3" stroke-linecap="round"/><path d="M304 491 L414 509" stroke="#7a5230" stroke-width="2.5" stroke-linecap="round"/><path d="M300 453 L423 464" stroke="#6a4626" stroke-width="4.1" stroke-linecap="round"/><path d="M298 446 L430 424" stroke="#8d6238" stroke-width="4.4" stroke-linecap="round"/><path d="M300 437 L418 448" stroke="#7a5230" stroke-width="2.8" stroke-linecap="round"/><path d="M328 465 L419 462" stroke="#5f3c1e" stroke-width="3.3" stroke-linecap="round"/><path d="M298 453 L416 448" stroke="#5f3c1e" stroke-width="4.5" stroke-linecap="round"/><path d="M352 470 L432 418 M360 480 L420 424" stroke="#4f3018" stroke-width="4.5" stroke-linecap="round"/><rect x="528" y="418" width="92" height="26" rx="9" fill="#8f6243" transform="rotate(-10 574.0 431.0)"/><rect x="508" y="448" width="132" height="30" rx="9" fill="#8a5a38" transform="rotate(-3 574.0 463.0)"/><rect x="524" y="474" width="108" height="26" rx="9" fill="#7b4c2d" transform="rotate(-2 578.0 487.0)"/><rect x="600" y="436" width="44" height="22" rx="9" fill="#a5734c" transform="rotate(-6 622.0 447.0)"/><path d="M520 462 H630 M536 486 H622 M540 430 L610 420" stroke="#5a3520" stroke-width="2" opacity="0.6"/><ellipse cx="534" cy="436" rx="7" ry="11" fill="#d9b78e"/><ellipse cx="514" cy="464" rx="7" ry="11" fill="#d9b78e"/><ellipse cx="640" cy="448" rx="7" ry="11" fill="#d9b78e"/><path d="M100 549 H226" stroke="#716c66" stroke-width="2" stroke-dasharray="7 1.5 11 1.5 5 1.5 14 1.5 9 1.5" opacity="0.72"/><path d="M100 561 H224" stroke="#716c66" stroke-width="2" stroke-dasharray="7 1.5 11 1.5 5 1.5 14 1.5 9 1.5" opacity="0.72"/><path d="M303 549 H392" stroke="#716c66" stroke-width="2" stroke-dasharray="7 1.5 11 1.5 5 1.5 14 1.5 9 1.5" opacity="0.72"/><path d="M303 561 H420" stroke="#716c66" stroke-width="2" stroke-dasharray="7 1.5 11 1.5 5 1.5 14 1.5 9 1.5" opacity="0.72"/><path d="M488 549 H660" stroke="#716c66" stroke-width="2" stroke-dasharray="7 1.5 11 1.5 5 1.5 14 1.5 9 1.5" opacity="0.72"/><path d="M488 561 H632" stroke="#716c66" stroke-width="2" stroke-dasharray="7 1.5 11 1.5 5 1.5 14 1.5 9 1.5" opacity="0.72"/><text x="62" y="589" font-family="Liberation Serif, serif" font-weight="bold" font-size="12" fill="#22777a" stroke="#22777a" stroke-width="0.5" textLength="82" lengthAdjust="spacingAndGlyphs">DURANTE ...</text><path d="M68 605 H195" stroke="#716c66" stroke-width="1.9" stroke-dasharray="7 1.5 11 1.5 5 1.5 14 1.5 9 1.5" opacity="0.72"/><path d="M68 622 H445" stroke="#716c66" stroke-width="1.9" stroke-dasharray="7 1.5 11 1.5 5 1.5 14 1.5 9 1.5" opacity="0.72"/><path d="M68 639 H345" stroke="#716c66" stroke-width="1.9" stroke-dasharray="7 1.5 11 1.5 5 1.5 14 1.5 9 1.5" opacity="0.72"/><path d="M68 655 H465" stroke="#716c66" stroke-width="1.9" stroke-dasharray="7 1.5 11 1.5 5 1.5 14 1.5 9 1.5" opacity="0.72"/><path d="M68 667 H440" stroke="#716c66" stroke-width="1.9" stroke-dasharray="7 1.5 11 1.5 5 1.5 14 1.5 9 1.5" opacity="0.72"/><text x="62" y="692" font-family="Liberation Serif, serif" font-weight="bold" font-size="12" fill="#22777a" stroke="#22777a" stroke-width="0.5" textLength="84" lengthAdjust="spacingAndGlyphs">DESPUÉS ...</text><path d="M68 708 H455" stroke="#716c66" stroke-width="1.9" stroke-dasharray="7 1.5 11 1.5 5 1.5 14 1.5 9 1.5" opacity="0.72"/><path d="M68 724 H245" stroke="#716c66" stroke-width="1.9" stroke-dasharray="7 1.5 11 1.5 5 1.5 14 1.5 9 1.5" opacity="0.72"/><path d="M68 741 H440" stroke="#716c66" stroke-width="1.9" stroke-dasharray="7 1.5 11 1.5 5 1.5 14 1.5 9 1.5" opacity="0.72"/><path d="M68 752 H405" stroke="#716c66" stroke-width="1.9" stroke-dasharray="7 1.5 11 1.5 5 1.5 14 1.5 9 1.5" opacity="0.72"/><path d="M68 770 H210" stroke="#716c66" stroke-width="1.9" stroke-dasharray="7 1.5 11 1.5 5 1.5 14 1.5 9 1.5" opacity="0.72"/><path d="M68 789 H462" stroke="#716c66" stroke-width="1.9" stroke-dasharray="7 1.5 11 1.5 5 1.5 14 1.5 9 1.5" opacity="0.72"/><path d="M68 800 H455" stroke="#716c66" stroke-width="1.9" stroke-dasharray="7 1.5 11 1.5 5 1.5 14 1.5 9 1.5" opacity="0.72"/><path d="M68 811 H235" stroke="#716c66" stroke-width="1.9" stroke-dasharray="7 1.5 11 1.5 5 1.5 14 1.5 9 1.5" opacity="0.72"/><path d="M68 829 H262" stroke="#716c66" stroke-width="1.9" stroke-dasharray="7 1.5 11 1.5 5 1.5 14 1.5 9 1.5" opacity="0.72"/><path d="M68 846 H440" stroke="#716c66" stroke-width="1.9" stroke-dasharray="7 1.5 11 1.5 5 1.5 14 1.5 9 1.5" opacity="0.72"/><path d="M68 862 H400" stroke="#716c66" stroke-width="1.9" stroke-dasharray="7 1.5 11 1.5 5 1.5 14 1.5 9 1.5" opacity="0.72"/><rect x="62" y="603.5" width="3" height="3" fill="#2a7f82"/><rect x="62" y="620.5" width="3" height="3" fill="#2a7f82"/><rect x="62" y="637.5" width="3" height="3" fill="#2a7f82"/><rect x="62" y="653.5" width="3" height="3" fill="#2a7f82"/><rect x="62" y="706.5" width="3" height="3" fill="#2a7f82"/><rect x="62" y="722.5" width="3" height="3" fill="#2a7f82"/><rect x="62" y="739.5" width="3" height="3" fill="#2a7f82"/><rect x="62" y="768.5" width="3" height="3" fill="#2a7f82"/><rect x="62" y="787.5" width="3" height="3" fill="#2a7f82"/><rect x="62" y="827.5" width="3" height="3" fill="#2a7f82"/><rect x="62" y="844.5" width="3" height="3" fill="#2a7f82"/><rect x="62" y="860.5" width="3" height="3" fill="#2a7f82"/><ellipse cx="585" cy="660" rx="108" ry="76" fill="#f0621f"/><text x="585" y="629.0" font-family="Liberation Serif, serif" font-weight="bold" font-size="14.5" fill="#fff" text-anchor="middle" textLength="150" lengthAdjust="spacingAndGlyphs">RECUERDA: Si está</text><text x="585" y="647.3" font-family="Liberation Serif, serif" font-weight="bold" font-size="14.5" fill="#fff" text-anchor="middle" textLength="150" lengthAdjust="spacingAndGlyphs">demasiado caliente</text><text x="585" y="665.6" font-family="Liberation Serif, serif" font-weight="bold" font-size="14.5" fill="#fff" text-anchor="middle" textLength="140" lengthAdjust="spacingAndGlyphs">para tocarla, está</text><text x="585" y="683.9" font-family="Liberation Serif, serif" font-weight="bold" font-size="14.5" fill="#fff" text-anchor="middle" textLength="150" lengthAdjust="spacingAndGlyphs">demasiado caliente</text><text x="585" y="702.2" font-family="Liberation Serif, serif" font-weight="bold" font-size="14.5" fill="#fff" text-anchor="middle" textLength="140" lengthAdjust="spacingAndGlyphs">para abandonarla.</text><path d="M498 838 L521 935" stroke="#6a3520" stroke-width="6.5"/><path d="M470 802 C466 782 480 772 500 772 C518 778 529 802 526 826 L505 838 L479 843 C473 832 471 817 470 802 Z" fill="#2c2c30"/><path d="M476 800 C477 788 486 780 498 779" fill="none" stroke="#77777c" stroke-width="3"/><path d="M570 814 C548 822 540 850 528 874 C520 888 504 888 500 900 C500 914 516 917 527 909 C547 895 562 870 574 850 Z" fill="#7a4220"/><path d="M648 814 C672 822 680 846 684 862 C689 850 691 838 698 841 C701 858 697 882 682 891 C668 896 658 880 654 858 Z" fill="#7a4220"/><path d="M562 906 C554 870 550 834 575 811 C590 802 630 802 648 811 C674 830 667 880 658 906 Z" fill="#6d3a1a"/><ellipse cx="608" cy="868" rx="27" ry="29" fill="#8c5027"/><ellipse cx="590" cy="832" rx="17" ry="13" fill="#85491f"/><ellipse cx="628" cy="832" rx="17" ry="13" fill="#85491f"/><rect x="562" y="903" width="96" height="33" fill="#2f4d8f"/><rect x="562" y="902" width="96" height="10" fill="#29221e"/><rect x="603" y="901" width="13" height="12" fill="#c9a23c"/><ellipse cx="602" cy="786" rx="34" ry="30" fill="#6a381a"/><ellipse cx="602" cy="794" rx="15" ry="12" fill="#c9a272"/><ellipse cx="602" cy="788" rx="5.5" ry="4" fill="#1e120b"/><circle cx="590" cy="777" r="2.4" fill="#1e120b"/><circle cx="614" cy="777" r="2.4" fill="#1e120b"/><ellipse cx="602" cy="759" rx="45" ry="8.5" fill="#86643a"/><path d="M578 757 C578 736 590 723 602 723 C614 723 626 736 626 757 Z" fill="#9a7642"/><rect x="578" y="748" width="48" height="9" fill="#4a3018"/><rect x="73" y="884" width="24" height="30" fill="#333"/><circle cx="123" cy="899" r="14" fill="#2b2b2b"/><circle cx="123" cy="899" r="7" fill="#bbb"/><path d="M143 885 h20 v20 l-10 10 l-10 -10 Z" fill="#444"/><text x="165" y="914" font-family="Liberation Sans, sans-serif" font-weight="bold" font-size="30" fill="#222" textLength="44" lengthAdjust="spacingAndGlyphs">YM</text><path d="M218 907 H330" stroke="#716c66" stroke-width="1.4" stroke-dasharray="7 1.5 11 1.5 5 1.5 14 1.5 9 1.5" opacity="0.72"/><rect x="51.3" y="48.3" width="179.4" height="79.5" fill="#e8402f"/><text x="87" y="107.6" font-family="Liberation Sans, sans-serif" font-size="58" fill="#fff" textLength="99.6" lengthAdjust="spacingAndGlyphs">PDF</text></g><clipPath id="c2"><rect x="794" y="379" width="222.6" height="315.6"/></clipPath><clipPath id="c3"><rect x="1058" y="379" width="222.6" height="315.6"/></clipPath><clipPath id="c4"><rect x="530" y="858" width="222.6" height="108.6"/></clipPath></defs><g clip-path="url(#c2)"><use href="#camp" transform="translate(785 370) scale(0.33333)"/></g><g clip-path="url(#c3)"><g transform="translate(1050 370) scale(0.33333)"><path d="M24 32 L32 24" stroke="#f5f0e6" stroke-width="1.3"/><path d="M24 37 L37 24" stroke="#f5f0e6" stroke-width="1.3"/><path d="M24 42 L42 24" stroke="#f5f0e6" stroke-width="1.3"/><path d="M24 47 L47 24" stroke="#f5f0e6" stroke-width="1.3"/><path d="M24 52 L52 24" stroke="#f5f0e6" stroke-width="1.3"/><path d="M24 57 L57 24" stroke="#f5f0e6" stroke-width="1.3"/><path d="M24 62 L62 24" stroke="#f5f0e6" stroke-width="1.3"/><path d="M24 67 L67 24" stroke="#f5f0e6" stroke-width="1.3"/><path d="M24 72 L72 24" stroke="#f5f0e6" stroke-width="1.3"/><path d="M24 77 L77 24" stroke="#f5f0e6" stroke-width="1.3"/><path d="M24 82 L82 24" stroke="#f5f0e6" stroke-width="1.3"/><path d="M24 87 L87 24" stroke="#f5f0e6" stroke-width="1.3"/><path d="M24 92 L92 24" stroke="#f5f0e6" stroke-width="1.3"/><path d="M24 97 L97 24" stroke="#f5f0e6" stroke-width="1.3"/><path d="M24 102 L102 24" stroke="#f5f0e6" stroke-width="1.3"/><path d="M24 107 L107 24" stroke="#f5f0e6" stroke-width="1.3"/><path d="M24 112 L112 24" stroke="#f5f0e6" stroke-width="1.3"/><path d="M24 117 L117 24" stroke="#f5f0e6" stroke-width="1.3"/><path d="M24 122 L122 24" stroke="#f5f0e6" stroke-width="1.3"/><path d="M24 127 L127 24" stroke="#f5f0e6" stroke-width="1.3"/><path d="M24 132 L132 24" stroke="#f5f0e6" stroke-width="1.3"/><path d="M24 137 L137 24" stroke="#f5f0e6" stroke-width="1.3"/><path d="M24 142 L142 24" stroke="#f5f0e6" stroke-width="1.3"/><path d="M24 147 L147 24" stroke="#f5f0e6" stroke-width="1.3"/><path d="M24 152 L152 24" stroke="#f5f0e6" stroke-width="1.3"/><path d="M24 157 L157 24" stroke="#f5f0e6" stroke-width="1.3"/><path d="M24 162 L162 24" stroke="#f5f0e6" stroke-width="1.3"/><path d="M24 167 L167 24" stroke="#f5f0e6" stroke-width="1.3"/><path d="M24 172 L172 24" stroke="#f5f0e6" stroke-width="1.3"/><path d="M24 177 L177 24" stroke="#f5f0e6" stroke-width="1.3"/><path d="M24 182 L182 24" stroke="#f5f0e6" stroke-width="1.3"/><path d="M24 187 L187 24" stroke="#f5f0e6" stroke-width="1.3"/><path d="M463.4 103 L539.6 26.8" stroke="#f0c43a" stroke-width="2.1"/><path d="M491.8 103 L568.0 26.8" stroke="#f0c43a" stroke-width="2.1"/><path d="M519.3 103 L595.5 26.8" stroke="#f8d7a0" stroke-width="2.1"/><path d="M546.8 103 L623.0 26.8" stroke="#f0c43a" stroke-width="2.1"/><path d="M575.2 103 L651.4000000000001 26.8" stroke="#f0c43a" stroke-width="2.1"/><rect x="324.6" y="77.9" width="62.9" height="62.9" rx="12" fill="#e8402f"/><path d="M343.8 107.4 V92.2 H359 a12.2 12.2 0 0 1 0 24.4 H352 q-8.2 0 -8.2 8.2 V126.6" fill="none" stroke="#fff" stroke-width="6.4" stroke-linecap="round" stroke-linejoin="round"/><text x="358.6" y="190.8" font-family="Liberation Sans, sans-serif" font-weight="bold" font-size="36" fill="#111" stroke="#111" stroke-width="0.6" text-anchor="middle" textLength="308" lengthAdjust="spacingAndGlyphs">Welcome to PDF Agile</text><text x="358" y="221" font-family="Liberation Sans, sans-serif" font-size="20" fill="#222" text-anchor="middle" textLength="431" lengthAdjust="spacingAndGlyphs">Accelerate your PDF workflow like never before</text><clipPath id="pclip"><rect x="84" y="315" width="240" height="158" rx="8"/></clipPath><g clip-path="url(#pclip)"><rect x="84" y="315" width="240" height="158" fill="#fdd0cf"/><circle cx="293" cy="363" r="32" fill="#fbbcbc"/><path d="M125.3 342 L210.3 325.6 L233.5 440 L146 459.6 Z" fill="#fff"/><path d="M140 337.5 L202 324.6 L203.6 331.6 L141.6 344.6 Z" fill="#262626"/><rect x="143.6" y="356" width="21" height="17" fill="#ee5a48" transform="rotate(-11 154 364.5)"/><path d="M172 352 l42 -8.0" stroke="#f7bcb8" stroke-width="2.6"/><path d="M172 364 l44 -8.4" stroke="#f7bcb8" stroke-width="2.6"/><path d="M150 383 l66 -12.5" stroke="#f7bcb8" stroke-width="2.6"/><path d="M153 396 l66 -12.5" stroke="#f7bcb8" stroke-width="2.6"/><path d="M156 412 l56 -10.6" stroke="#f7bcb8" stroke-width="2.6"/><path d="M159 426 l24 -4.6" stroke="#f7bcb8" stroke-width="2.6"/><path d="M107 409 C118 420 128 422 138 419" fill="none" stroke="#222" stroke-width="2.3"/><path d="M258 398 C282 410 290 436 262 444 C244 448 232 442 233 436 M262 444 C290 436 312 440 310 462" fill="none" stroke="#222" stroke-width="2.3"/><path d="M220 414 L258 349 L283 364 L245 429 Z" fill="#ee4836"/><path d="M247 368 L268 333 L293 348 L272 383 Z" fill="#262626"/><path d="M220 414 L245 429 L229 436 L218 430 Z" fill="#262626"/></g><text x="338" y="358.6" font-family="Liberation Sans, sans-serif" font-size="78" fill="#dde7f8">1</text><text x="388" y="347" font-family="Liberation Sans, sans-serif" font-weight="bold" font-size="23" fill="#111" stroke="#111" stroke-width="0.9" textLength="242" lengthAdjust="spacingAndGlyphs">Quick and powerful editing</text><text x="388" y="381.0" font-family="Liberation Sans, sans-serif" font-size="16.5" fill="#333" textLength="238" lengthAdjust="spacingAndGlyphs">Quickly &amp; easily edit PDFs, change</text><text x="388" y="402.3" font-family="Liberation Sans, sans-serif" font-size="16.5" fill="#333" textLength="228" lengthAdjust="spacingAndGlyphs">document layout, modify text size,</text><text x="388" y="423.6" font-family="Liberation Sans, sans-serif" font-size="16.5" fill="#333" textLength="200" lengthAdjust="spacingAndGlyphs">font, or line spacing, and add</text><text x="388" y="444.9" font-family="Liberation Sans, sans-serif" font-size="16.5" fill="#333" textLength="75" lengthAdjust="spacingAndGlyphs">multimedia.</text><path d="M430 470 C450 520 420 545 330 538 C250 532 180 536 135 558" fill="none" stroke="#e2e2e2" stroke-width="2" stroke-dasharray="7 6"/><path d="M150 545 L133 559 L152 562" fill="none" stroke="#e2e2e2" stroke-width="2"/><path d="M95 740 C130 790 250 800 340 775 C420 760 480 790 525 835" fill="none" stroke="#e2e2e2" stroke-width="2" stroke-dasharray="7 6"/><path d="M508 832 L526 836 L524 818" fill="none" stroke="#e2e2e2" stroke-width="2"/><text x="33" y="633" font-family="Liberation Sans, sans-serif" font-size="78" fill="#dde7f8">2</text><text x="83" y="620" font-family="Liberation Sans, sans-serif" font-weight="bold" font-size="23" fill="#111" stroke="#111" stroke-width="0.9" textLength="252" lengthAdjust="spacingAndGlyphs">Convert into the best quality</text><text x="83" y="654.0" font-family="Liberation Sans, sans-serif" font-size="16.5" fill="#333" textLength="238" lengthAdjust="spacingAndGlyphs">Bunch converts any PDF to &amp; from</text><text x="83" y="675.3" font-family="Liberation Sans, sans-serif" font-size="16.5" fill="#333" textLength="240" lengthAdjust="spacingAndGlyphs">Microsoft Word, Excel, PowerPoint,</text><text x="83" y="696.6" font-family="Liberation Sans, sans-serif" font-size="16.5" fill="#333" textLength="242" lengthAdjust="spacingAndGlyphs">image, TXT, or DWG without losing</text><text x="83" y="717.9" font-family="Liberation Sans, sans-serif" font-size="16.5" fill="#333" textLength="140" lengthAdjust="spacingAndGlyphs">fonts and formatting.</text><clipPath id="bclip"><rect x="390" y="591" width="249" height="158" rx="8"/></clipPath><g clip-path="url(#bclip)"><rect x="390" y="591" width="249" height="158" fill="#cfe0fc"/><circle cx="598" cy="602" r="58" fill="#e7f0fe"/><circle cx="589" cy="590" r="21" fill="#fff"/><circle cx="428" cy="724" r="47" fill="#a9cdf8"/><circle cx="444" cy="748" r="18" fill="#fff"/><path d="M520 749 C540 700 600 690 639 700 V749 Z" fill="#dbe8fd"/><path d="M458.7 633 H537 L496 615 L514 598 L568.4 656.5 H458.7 Z" fill="#3d8ef0"/><path d="M458.7 677 H570 V701.7 H519.4 L532.3 718.2 L522 733.7 L480.8 701.7 H458.7 Z" fill="#262626"/><path d="M458.7 677 C490 688 510 712 518 727 L509 733 C498 716 480 705 458.7 701.7 Z" fill="#3d8ef0"/></g><clipPath id="gclip"><rect x="85" y="855" width="240" height="160" rx="8"/></clipPath><g clip-path="url(#gclip)"><rect x="85" y="855" width="240" height="160" fill="#c4ebc6"/><rect x="160" y="878" width="100" height="80" rx="6" fill="#eaf8ea"/><rect x="150" y="940" width="120" height="60" fill="#b2e2b6"/><path d="M182 900 l3 6 l7 1 l-5 5 l1 7 l-6 -3 l-6 3 l1 -7 l-5 -5 l7 -1 Z" fill="#3aa76d"/><rect x="196" y="898" width="42" height="4" fill="#a9dfb0"/><rect x="196" y="908" width="42" height="4" fill="#a9dfb0"/><rect x="136" y="929" width="150" height="5" fill="#3d3d3d"/><circle cx="272" cy="913" r="29" fill="#3aa76d"/><text x="272" y="919" font-family="Liberation Sans, sans-serif" font-weight="bold" font-size="15" fill="#fff" text-anchor="middle">OCR</text><path d="M128 880 v-6 h6 M264 878 h6 v6" fill="none" stroke="#2d6b45" stroke-width="2.5"/><rect x="185" y="958" width="28" height="3" fill="#8fd09a"/></g><text x="337" y="908" font-family="Liberation Sans, sans-serif" font-size="78" fill="#dde7f8">3</text><text x="386" y="888" font-family="Liberation Sans, sans-serif" font-weight="bold" font-size="23" fill="#111" stroke="#111" stroke-width="0.9" textLength="195" lengthAdjust="spacingAndGlyphs">Extract text with OCR</text><text x="386" y="921.0" font-family="Liberation Sans, sans-serif" font-size="16.5" fill="#333" textLength="262" lengthAdjust="spacingAndGlyphs">Extract text from images, image-based</text><text x="386" y="943.3" font-family="Liberation Sans, sans-serif" font-size="16.5" fill="#333" textLength="246" lengthAdjust="spacingAndGlyphs">or scanned PDFs with 22 languages</text><text x="386" y="965.6" font-family="Liberation Sans, sans-serif" font-size="16.5" fill="#333" textLength="72" lengthAdjust="spacingAndGlyphs">supported.</text><rect x="48.3" y="48.3" width="179.4" height="79.5" fill="#e8402f"/><text x="84" y="107.6" font-family="Liberation Sans, sans-serif" font-size="58" fill="#fff" textLength="99.6" lengthAdjust="spacingAndGlyphs">PDF</text></g></g><g clip-path="url(#c4)"><use href="#camp" transform="translate(521 849) scale(0.33333)"/></g>
</svg>
</body></html>
